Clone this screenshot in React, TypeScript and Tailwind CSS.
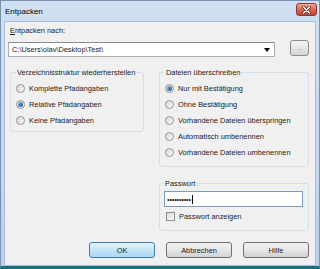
import React from 'react';

const Radio: React.FC<{ label: string; checked?: boolean }> = ({ label, checked }) => (
  <div className="flex items-center h-[16px] gap-[4px]">
    <div className="w-[9px] h-[9px] rounded-full border border-[#929292] bg-gradient-to-br from-[#d6d6d6] to-[#fbfbfb] flex items-center justify-center">
      {checked && <div className="w-[5px] h-[5px] rounded-full bg-gradient-to-br from-[#7fb8e6] to-[#174f8f]"></div>}
    </div>
    <span>{label}</span>
  </div>
);

const Button: React.FC<{ label: string; primary?: boolean }> = ({ label, primary }) => (
  <div
    className={`w-[66px] h-[16px] rounded-[3px] border flex items-center justify-center ${
      primary
        ? 'border-[#3c7fb1] bg-gradient-to-b from-[#e5f4fc] via-[#c4e5f6] to-[#a8d8f2]'
        : 'border-[#707070] bg-gradient-to-b from-[#f2f2f2] via-[#e6e6e6] to-[#d2d2d2]'
    }`}
  >
    {label}
  </div>
);

const App: React.FC = () => {
  return (
    <div className="w-[320px] h-[269px] flex flex-col bg-gradient-to-b from-[#d0e0f2] to-[#bcd2ea] border border-[#7893b1] border-b-[3px] border-b-[#1f6f7f] font-['Liberation_Sans',Arial,sans-serif] text-[7.4px] leading-[9px] text-[#1b1b1b] overflow-hidden">
      {/* Titelleiste */}
      <div className="h-[20px] flex items-start justify-between pl-[4px] pr-[2px]">
        <span className="text-[8px] leading-[9px] mt-[6px] text-black">Entpacken</span>
        <div className="mt-[2px] w-[21px] h-[13px] rounded-[3px] border border-[#8a3b2e] bg-gradient-to-b from-[#e9a99a] via-[#d46a55] to-[#c0452e] flex items-center justify-center">
          <svg width="9" height="8" viewBox="0 0 9 8">
            <path d="M1.5 1 L7.5 7 M7.5 1 L1.5 7" stroke="#5a2318" strokeWidth="3" strokeLinecap="round" />
            <path d="M1.5 1 L7.5 7 M7.5 1 L1.5 7" stroke="#ffffff" strokeWidth="1.6" strokeLinecap="round" />
          </svg>
        </div>
      </div>

      {/* Inhalt */}
      <div className="flex-1 mx-[3px] bg-[#f0f0f0] border border-[#a8bdd6] flex flex-col">
        <div className="ml-[5px] mt-[4px]">
          <span className="underline underline-offset-1">E</span>ntpacken nach:
        </div>

        <div className="flex items-start mt-[5px]">
          <div className="ml-[3px] mt-[2px] w-[267px] h-[15px] bg-white border border-[#abadb3] border-t-[#8a8c92] flex items-center justify-between pl-[3px] pr-[4px]">
            <span>C:\Users\olav\Desktop\Test\</span>
            <svg width="6" height="4" viewBox="0 0 6 4">
              <path d="M0 0 L6 0 L3 4 Z" fill="#000" />
            </svg>
          </div>
          <div className="ml-[15px] w-[19px] h-[16px] rounded-[3px] border border-[#8c8c8c] bg-gradient-to-b from-[#f4f4f4] to-[#d6d6d6] flex items-center justify-center text-[#8a7ea6] text-[6px]">
            ...
          </div>
        </div>

        <div className="flex items-start mt-[11px]">
          <fieldset className="ml-[5px] w-[134px] h-[64px] border border-[#d5dfe5] rounded-[3px] pl-[5px] pb-[3px]">
            <legend className="px-[1px] leading-[9px]">Verzeichnisstruktur wiederherstellen</legend>
            <div className="mt-[3px] flex flex-col">
              <Radio label="Komplette Pfadangaben" />
              <Radio label="Relative Pfadangaben" checked />
              <Radio label="Keine Pfadangaben" />
            </div>
          </fieldset>

          <div className="ml-[15px] w-[150px] flex flex-col">
            <fieldset className="h-[99px] border border-[#d5dfe5] rounded-[3px] pl-[5px]">
              <legend className="px-[1px] leading-[9px]">Dateien überschreiben</legend>
              <div className="mt-[3px] flex flex-col">
                <Radio label="Nur mit Bestätigung" checked />
                <Radio label="Ohne Bestätigung" />
                <Radio label="Vorhandene Dateien überspringen" />
                <Radio label="Automatisch umbenennen" />
                <Radio label="Vorhandene Dateien umbenennen" />
              </div>
            </fieldset>

            <fieldset className="mt-[12px] h-[52px] border border-[#d5dfe5] rounded-[3px] pl-[4px]">
              <legend className="px-[1px] leading-[9px]">Passwort</legend>
              <div className="mt-[3px] w-[139px] h-[16px] bg-white border border-[#7a9cc4] flex items-center pl-[2px]">
                <span className="text-[7.4px] tracking-[-0.2px]">••••••••••</span>
                <div className="w-[1px] h-[9px] bg-black ml-[1px]"></div>
              </div>
              <div className="mt-[4px] ml-[2px] flex items-center gap-[4px] h-[10px]">
                <div className="w-[9px] h-[9px] border border-[#8e8f8f] bg-gradient-to-br from-[#dcdcdc] to-[#fafafa]"></div>
                <span>Passwort anzeigen</span>
              </div>
            </fieldset>
          </div>
        </div>

        <div className="flex justify-end gap-[11px] pr-[6px] mt-[11px]">
          <Button label="OK" primary />
          <Button label="Abbrechen" />
          <Button label="Hilfe" />
        </div>
      </div>
    </div>
  );
};

export default App;
